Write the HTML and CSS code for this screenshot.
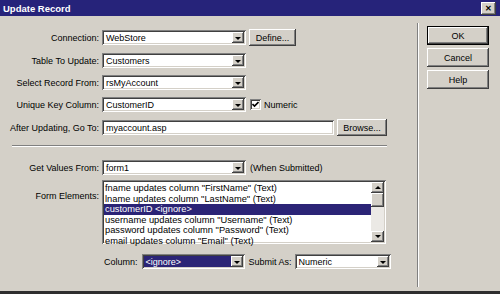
FILE: index.html
```html
<!DOCTYPE html>
<html lang="en">
<head>
    <meta charset="UTF-8">
    <title>Update Record</title>
    <link rel="stylesheet" href="styles.css">
</head>
<body>
    <div class="dialog">
        <div class="titlebar">
            <span class="title">Update Record</span>
            <span class="close-btn">&#x2715;</span>
        </div>

        <div class="dialog-body">
            <div class="form-area">
                <div class="form-grid">
                    <label class="field-label">Connection:</label>
                    <div class="field-controls">
                        <div class="field select wide"><span>WebStore</span><span class="drop-btn"></span></div>
                        <button class="btn define-btn">Define...</button>
                    </div>

                    <label class="field-label">Table To Update:</label>
                    <div class="field-controls">
                        <div class="field select wide"><span>Customers</span><span class="drop-btn"></span></div>
                    </div>

                    <label class="field-label">Select Record From:</label>
                    <div class="field-controls">
                        <div class="field select wide"><span>rsMyAccount</span><span class="drop-btn"></span></div>
                    </div>

                    <label class="field-label">Unique Key Column:</label>
                    <div class="field-controls">
                        <div class="field select wide"><span>CustomerID</span><span class="drop-btn"></span></div>
                        <span class="checkbox">
                            <svg width="7" height="7" viewBox="0 0 7 7"><polyline points="0.5,3 2.5,5 6.5,1" fill="none" stroke="#000" stroke-width="1.6"/></svg>
                        </span>
                        <span class="check-label">Numeric</span>
                    </div>

                    <label class="field-label">After Updating, Go To:</label>
                    <div class="field-controls">
                        <div class="field text-input"><span>myaccount.asp</span></div>
                        <button class="btn browse-btn">Browse...</button>
                    </div>
                </div>

                <hr class="etched">

                <div class="form-grid lower">
                    <label class="field-label">Get Values From:</label>
                    <div class="field-controls">
                        <div class="field select wide"><span>form1</span><span class="drop-btn"></span></div>
                        <span class="hint">(When Submitted)</span>
                    </div>

                    <label class="field-label list-label">Form Elements:</label>
                    <div class="listbox field">
                        <ul class="list-items">
                            <li>fname updates column "FirstName" (Text)</li>
                            <li>lname updates column "LastName" (Text)</li>
                            <li class="selected">customerID &lt;ignore&gt;</li>
                            <li>username updates column "Username" (Text)</li>
                            <li>password updates column "Password" (Text)</li>
                            <li>email updates column "Email" (Text)</li>
                        </ul>
                        <div class="scrollbar">
                            <span class="scroll-btn up"></span>
                            <span class="scroll-thumb"></span>
                            <span class="scroll-track"></span>
                            <span class="scroll-btn down"></span>
                        </div>
                    </div>

                    <span></span>
                    <div class="column-row">
                        <span>Column:</span>
                        <div class="field select column-select active"><span>&lt;ignore&gt;</span><span class="drop-btn"></span></div>
                        <span>Submit As:</span>
                        <div class="field select submit-select"><span>Numeric</span><span class="drop-btn"></span></div>
                    </div>
                </div>
            </div>

            <div class="button-col">
                <button class="btn side-btn default">OK</button>
                <button class="btn side-btn">Cancel</button>
                <button class="btn side-btn">Help</button>
            </div>
        </div>
    </div>
</body>
</html>
```

FILE: styles.css
```css
/* Reset */
* {
    margin: 0;
    padding: 0;
    box-sizing: border-box;
}

body {
    font-family: 'Liberation Sans', Arial, sans-serif;
    font-size: 9px;
    color: #000;
    background-color: #d4d0c8; /* classic dialog grey */
    width: 500px;
    height: 294px;
    overflow: hidden;
}

/* Window frame */
.dialog {
    width: 500px;
    height: 294px;
    display: flex;
    flex-direction: column;
    border-bottom: 3px solid #2e2e2e;
}

.titlebar {
    height: 16px;
    flex-shrink: 0;
    display: flex;
    align-items: center;
    justify-content: space-between;
    padding: 0 4px 0 3px;
    background-color: #26237a;
    color: #fff;
    font-weight: bold;
    font-size: 9.5px;
}

.close-btn {
    width: 15px;
    height: 13px;
    display: flex;
    align-items: center;
    justify-content: center;
    background-color: #d4d0c8;
    color: #000;
    font-size: 8px;
    font-weight: bold;
    box-shadow: inset -1px -1px #404040, inset 1px 1px #fff, inset -2px -2px #808080;
}

.dialog-body {
    flex: 1;
    display: flex;
}

/* Left form area */
.form-area {
    width: 418px;
    margin: 7px 0 4px;
    padding-top: 6px;
    border-right: 1px solid #808080;
    box-shadow: 1px 0 0 #fff;
}

.form-grid {
    display: grid;
    grid-template-columns: 99px auto;
    column-gap: 3px;
    row-gap: 7px;
    align-items: center;
}

.field-label {
    text-align: right;
    white-space: nowrap;
}

.field-controls {
    display: flex;
    align-items: center;
}

/* Sunken fields */
.field {
    height: 15px;
    display: flex;
    align-items: center;
    padding: 0 2px 0 4px;
    background-color: #fff;
    white-space: nowrap;
    box-shadow: inset 1px 1px #808080, inset -1px -1px #fff, inset 2px 2px #404040, inset -2px -2px #d4d0c8;
}

.select {
    justify-content: space-between;
}

.select.wide {
    width: 144px;
}

.drop-btn {
    width: 12px;
    height: 11px;
    display: flex;
    align-items: center;
    justify-content: center;
    background-color: #d4d0c8;
    box-shadow: inset -1px -1px #404040, inset 1px 1px #fff, inset -2px -2px #808080;
}

.drop-btn::after {
    content: "";
    border-left: 3px solid transparent;
    border-right: 3px solid transparent;
    border-top: 3px solid #000;
    margin-top: 1px;
}

.text-input {
    width: 232px;
}

/* Raised buttons */
.btn {
    font-family: inherit;
    font-size: 9px;
    color: #000;
    background-color: #d4d0c8;
    border: none;
    box-shadow: inset -1px -1px #404040, inset 1px 1px #fff, inset -2px -2px #808080;
}

.define-btn {
    width: 47px;
    height: 17px;
    margin-left: 3px;
}

.browse-btn {
    width: 50px;
    height: 17px;
    margin-left: 3px;
}

.checkbox {
    width: 11px;
    height: 11px;
    margin-left: 4px;
    display: flex;
    align-items: center;
    justify-content: center;
    background-color: #fff;
    box-shadow: inset 1px 1px #808080, inset -1px -1px #fff, inset 2px 2px #404040, inset -2px -2px #d4d0c8;
}

.check-label {
    margin-left: 3px;
}

.etched {
    border: none;
    border-top: 1px solid #808080;
    border-bottom: 1px solid #fff;
    margin: 9px 0 0 12px;
    width: 375px;
}

/* Lower half */
.form-grid.lower {
    margin-top: 13px;
    row-gap: 5px;
}

.hint {
    margin-left: 4px;
}

.list-label {
    align-self: start;
    margin-top: 11px;
}

.listbox {
    width: 284px;
    height: 64px;
    padding: 2px;
    align-items: stretch;
}

.list-items {
    list-style: none;
    flex: 1;
    padding-top: 1px;
    font-size: 9.3px;
}

.list-items li {
    height: 10.5px;
    line-height: 10.5px;
    padding-left: 1px;
    white-space: nowrap;
    overflow: hidden;
}

.list-items li.selected {
    background-color: #2b2476;
    color: #fff;
}

.scrollbar {
    width: 13px;
    display: flex;
    flex-direction: column;
}

.scroll-btn {
    height: 11px;
    display: flex;
    align-items: center;
    justify-content: center;
    background-color: #d4d0c8;
    box-shadow: inset -1px -1px #404040, inset 1px 1px #fff, inset -2px -2px #808080;
}

.scroll-btn.up::after {
    content: "";
    border-left: 3px solid transparent;
    border-right: 3px solid transparent;
    border-bottom: 3px solid #000;
}

.scroll-btn.down::after {
    content: "";
    border-left: 3px solid transparent;
    border-right: 3px solid transparent;
    border-top: 3px solid #000;
}

.scroll-thumb {
    height: 14px;
    background-color: #d4d0c8;
    box-shadow: inset -1px -1px #404040, inset 1px 1px #fff, inset -2px -2px #808080;
}

.scroll-track {
    flex: 1;
    background-color: #ebe9e5;
}

.column-row {
    display: flex;
    align-items: center;
    gap: 4px;
    margin: 5px 0 0 2px;
}

.column-select {
    width: 103px;
}

.column-select.active {
    background-color: #2b2476;
    color: #fff;
}

.submit-select {
    width: 96px;
    margin-left: -1px;
}

/* Right button column */
.button-col {
    display: flex;
    flex-direction: column;
    gap: 3px;
    padding: 10px 0 0 9px;
}

.side-btn {
    width: 62px;
    height: 19px;
}

.side-btn.default {
    border: 1px solid #000;
}
```
